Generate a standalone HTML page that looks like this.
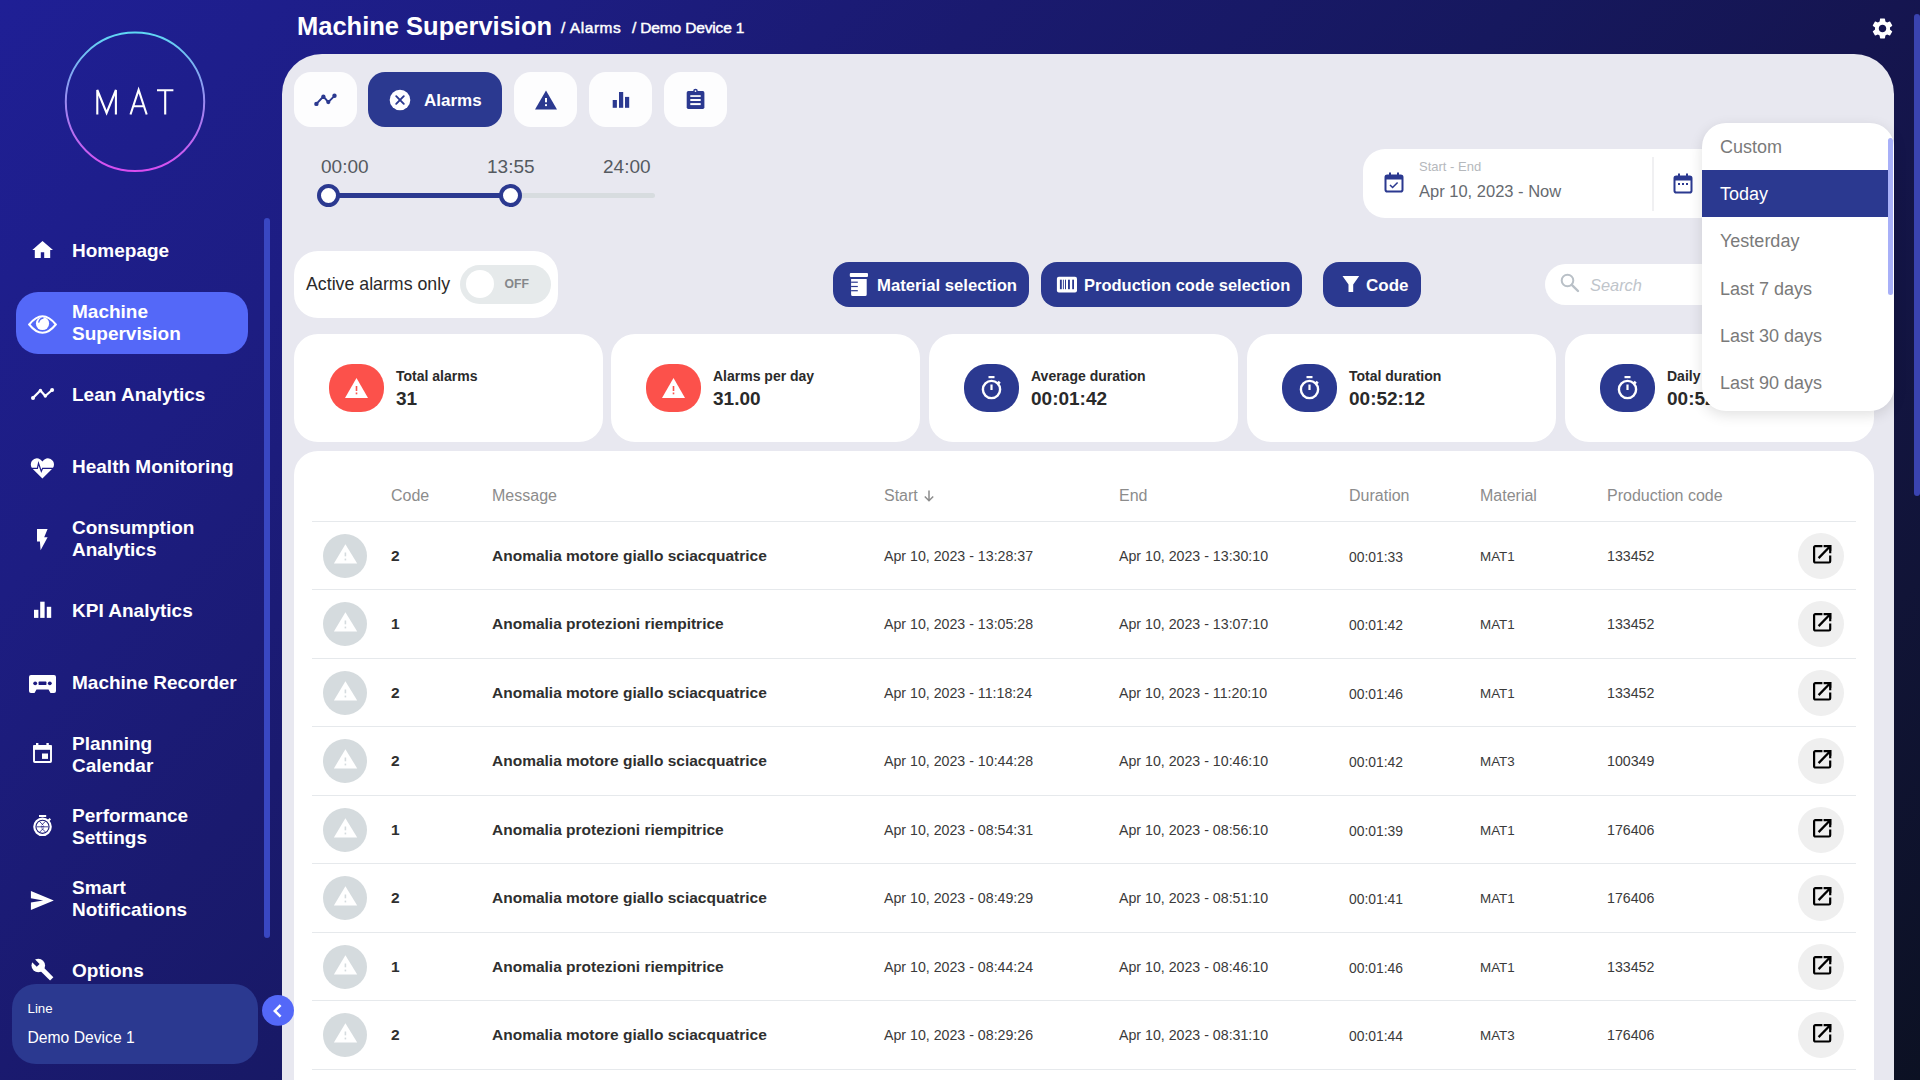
<!DOCTYPE html>
<html><head><meta charset="utf-8">
<style>
*{box-sizing:border-box;margin:0;padding:0}
html,body{width:1920px;height:1080px;overflow:hidden}
body{font-family:"Liberation Sans",sans-serif;background:linear-gradient(133deg,rgb(31,31,149) 0%,rgb(29,29,130) 19%,rgb(26,26,111) 34%,rgb(22,24,94) 52%,rgb(21,21,80) 65%,rgb(17,20,55) 84%,rgb(12,17,35) 100%);position:relative;color:#222}
.abs{position:absolute}
.nav{position:absolute;left:72px;color:#fff;font-weight:bold;font-size:19px;line-height:22px;white-space:nowrap}
.nico{position:absolute;left:30px;width:24px;height:24px}
#panel{position:absolute;left:282px;top:54px;width:1612px;height:1100px;background:#e8e8f0;border-top-left-radius:40px;border-top-right-radius:40px}
.tab{position:absolute;top:72px;height:55px;width:63px;background:#fdfdfe;border-radius:17px}
.card{position:absolute;background:#fff}
.btn{position:absolute;top:262px;height:45px;background:#2b3990;border-radius:16px;color:#fff;font-size:17px;font-weight:bold;white-space:nowrap}
.stat{position:absolute;top:334px;height:108px;width:309px;background:#fff;border-radius:24px}
.sico{position:absolute;left:35px;top:30px;width:55px;height:48px;border-radius:23px}
.slab{position:absolute;left:102px;top:34.3px;font-size:14px;font-weight:bold;color:#2a2a2a;white-space:nowrap}
.sval{position:absolute;left:102px;top:54.1px;font-size:19px;font-weight:bold;color:#2a2a2a;white-space:nowrap}
.th{position:absolute;top:486.5px;font-size:16px;color:#8c8c8c;white-space:nowrap}
.row{position:absolute;left:312px;width:1544px;height:69px;border-top:1px solid #e6e9ec}
.cell{position:absolute;font-size:14.2px;color:#3a3a3a;white-space:nowrap;top:25.7px}
.ricon{position:absolute;left:11px;top:12px;width:44px;height:44px;border-radius:50%;background:#d5dbde}
.edit{position:absolute;left:1486px;top:11px;width:46px;height:46px;border-radius:50%;background:#efefef}
.dd{position:absolute;left:20px;font-size:18px;color:#7a7a7a;white-space:nowrap}
</style></head><body>

<!-- SIDEBAR -->
<svg class="abs" style="left:60px;top:27px" width="150" height="150" viewBox="0 0 150 150">
<defs><linearGradient id="lg" x1="0" y1="0" x2="0" y2="1"><stop offset="0" stop-color="#5fd8f4"/><stop offset="0.5" stop-color="#9a8af0"/><stop offset="1" stop-color="#d94df0"/></linearGradient></defs>
<circle cx="75" cy="74.8" r="69.2" fill="none" stroke="url(#lg)" stroke-width="2"/>
</svg>
<svg class="abs" style="left:0;top:0" width="200" height="130" viewBox="0 0 200 130"><g fill="none" stroke="#fff" stroke-width="2.1" stroke-linejoin="miter"><path d="M97.3 114.5V90L106.6 113L115.9 90V114.5"/><path d="M130.5 114.5L138.6 89.8L146.7 114.5M133.2 106.2H144"/><path d="M157 90.3H173.4M165.2 90.3V114.5"/></g></svg>
<div class="abs" style="left:264px;top:218px;width:6px;height:720px;border-radius:3px;background:#3947c2"></div>

<div class="abs" style="left:16px;top:292px;width:232px;height:62px;border-radius:22px;background:#5468f8"></div>

<div class="nav" style="top:240px">Homepage</div>
<div class="nav" style="top:301px">Machine<br>Supervision</div>
<div class="nav" style="top:384px">Lean Analytics</div>
<div class="nav" style="top:456px">Health Monitoring</div>
<div class="nav" style="top:517px">Consumption<br>Analytics</div>
<div class="nav" style="top:600px">KPI Analytics</div>
<div class="nav" style="top:672px">Machine Recorder</div>
<div class="nav" style="top:733px">Planning<br>Calendar</div>
<div class="nav" style="top:805px">Performance<br>Settings</div>
<div class="nav" style="top:877px">Smart<br>Notifications</div>
<div class="nav" style="top:960px">Options</div>

<div class="abs" style="left:12px;top:984px;width:246px;height:80px;border-radius:24px;background:#2b3990"></div>
<div class="abs" style="left:27.5px;top:1001px;font-size:13.3px;color:#fff">Line</div>
<div class="abs" style="left:27.5px;top:1029px;font-size:15.7px;color:#fff">Demo Device 1</div>


<!-- SIDEBAR ICONS -->
<svg class="abs" style="left:0;top:0" width="282" height="1080" viewBox="0 0 282 1080">
<g fill="#fff">
<path d="M32.3 250L42.5 241L53 250H50.2V258H44.2V252.3H40.8V258H34.8V250Z"/>
<path d="M29.2 324.5Q42.5 308 55.8 324.5Q42.5 341 29.2 324.5Z" fill="none" stroke="#fff" stroke-width="2"/>
<circle cx="42.5" cy="323.5" r="6.6"/>
<path d="M38.8 322.2Q39.5 318.6 43 318" fill="none" stroke="#5468f8" stroke-width="1.3" stroke-linecap="round"/>
<polyline points="33,397.9 40.4,390.5 45.3,396 52.1,390" fill="none" stroke="#fff" stroke-width="2.2" stroke-linejoin="round"/>
<circle cx="33" cy="397.9" r="2"/><circle cx="40.4" cy="390.5" r="1.7"/><circle cx="45.3" cy="396" r="1.7"/><circle cx="52.1" cy="390" r="2"/>
<path d="M42.4 478.6L31.8 468Q29.8 464.5 31.8 461Q34.6 457.5 38.5 458.5Q41 459.3 42.4 461.5Q43.8 459.3 46.3 458.5Q50.2 457.5 53 461Q55 464.5 53 468Z"/>
<polyline points="30,468.3 37.4,468.3 38.5,463.2 41.3,471.4 42.6,468.3 55,468.3" fill="none" stroke="#1e1c88" stroke-width="1.2"/>
<path d="M37 529.1H47.6L44.2 537.2H47.6L40.6 550.2L39.9 541.6H37Z"/>
<rect x="34" y="609.8" width="4.4" height="8.1"/><rect x="40.2" y="601.7" width="4.4" height="16.2"/><rect x="46.8" y="606.8" width="4.4" height="11.1"/>
<path d="M31 675H54A2 2 0 0 1 56 677V691A2 2 0 0 1 54 693H50.5L48.5 689.5H36.5L34.5 693H31A2 2 0 0 1 29 691V677A2 2 0 0 1 31 675Z"/>
<circle cx="35.2" cy="683.3" r="1.9" fill="#1c1a80"/><circle cx="49.8" cy="683.3" r="1.9" fill="#1c1a80"/><rect x="38.6" y="681.6" width="7.8" height="3.4" rx="0.6" fill="#1c1a80"/>
<path d="M35 746H50.2A0.8 0.8 0 0 1 51 746.8V761.2A0.8 0.8 0 0 1 50.2 762H34.8A0.8 0.8 0 0 1 34 761.2V746.8A0.8 0.8 0 0 1 34.8 746Z" fill="none" stroke="#fff" stroke-width="1.9"/>
<rect x="33.2" y="745.2" width="18.6" height="4.6"/><rect x="36" y="743" width="2.4" height="3"/><rect x="46.4" y="743" width="2.4" height="3"/>
<rect x="42" y="753.5" width="6" height="5.4"/>
<rect x="39" y="815" width="7.2" height="2"/>
<circle cx="42.5" cy="826.8" r="8.2" fill="none" stroke="#fff" stroke-width="2.2"/>
<circle cx="42.5" cy="826.8" r="6"/>
<path d="M44.2 826.8L36.5 826.8M40.8 826.8L48.5 826.8M43.4 825.3L39.5 821.5M41.6 828.3L45.5 832M41.6 825.3L45.2 821.5M43.4 828.3L39.8 832" stroke="#1c1a80" stroke-width="0.8"/>
<path d="M48.3 820.8L50.3 818.8" stroke="#fff" stroke-width="2"/>
<path d="M30.9 890.9L53.8 900.4L30.9 909.9L30.9 902.6L43.2 900.4L30.9 898.2Z"/>
<mask id="wm"><rect x="0" y="940" width="80" height="60" fill="#fff"/><rect x="36.3" y="956" width="4" height="9.3" fill="#000" transform="rotate(-45 38.3 965.5)"/></mask>
<g mask="url(#wm)"><g transform="rotate(-45 38.3 965.5)"><circle cx="38.3" cy="965.5" r="6.8"/><rect x="35.95" y="965.5" width="4.7" height="19"/></g></g>
</g>
</svg>

<!-- HEADER -->
<div class="abs" style="left:297px;top:12px;font-size:25.5px;font-weight:bold;color:#fff;white-space:nowrap">Machine Supervision</div>
<div class="abs" style="left:561px;top:19px;font-size:15.5px;color:#fff;white-space:nowrap;-webkit-text-stroke:0.45px #fff;letter-spacing:0.55px">/ Alarms</div>
<div class="abs" style="left:632px;top:19px;font-size:15.5px;color:#fff;white-space:nowrap;-webkit-text-stroke:0.45px #fff;letter-spacing:-0.15px">/ Demo Device 1</div>

<!-- MAIN PANEL -->
<div id="panel"></div>
<div class="abs" style="left:1914px;top:14px;width:6px;height:482px;border-radius:3px;background:#3a43b0"></div>


<!-- TABS -->
<div class="tab" style="left:294px"></div>
<svg class="abs" style="left:313px;top:88px" width="24" height="24" viewBox="0 0 24 24"><polyline points="3.4,15.9 10.4,8.5 15.3,14.1 21.5,7.8" fill="none" stroke="#2b3990" stroke-width="1.9" stroke-linejoin="round"/><circle cx="3.4" cy="15.9" r="2.2" fill="#2b3990"/><circle cx="21.5" cy="7.8" r="2.2" fill="#2b3990"/><circle cx="10.4" cy="8.5" r="2.1" fill="#2b3990"/><circle cx="15.3" cy="14.1" r="2.1" fill="#2b3990"/></svg>
<div class="tab" style="left:368px;width:134px;background:#2b3990"></div>
<svg class="abs" style="left:389px;top:89px" width="22" height="22" viewBox="0 0 22 22"><circle cx="11" cy="11" r="10.3" fill="#fff"/><path d="M7.2 7.2L14.8 14.8M14.8 7.2L7.2 14.8" stroke="#2b3990" stroke-width="1.9" stroke-linecap="round"/></svg>
<div class="abs" style="left:424px;top:90.5px;font-size:17px;font-weight:bold;color:#fff">Alarms</div>
<div class="tab" style="left:514px"></div>
<svg class="abs" style="left:534px;top:90px" width="24" height="20" viewBox="0 0 24 20"><path d="M12 0.5L23 19.5H1Z" fill="#2b3990"/><rect x="11" y="8" width="2" height="4.3" fill="#fff"/><rect x="11" y="14.2" width="2" height="1.9" fill="#fff"/></svg>
<div class="tab" style="left:589px"></div>
<svg class="abs" style="left:611px;top:91px" width="20" height="18" viewBox="0 0 20 18"><rect x="1.7" y="9" width="4.2" height="7.8" fill="#2b3990"/><rect x="8" y="1" width="4.2" height="15.8" fill="#2b3990"/><rect x="14" y="5.9" width="4.2" height="10.9" fill="#2b3990"/></svg>
<div class="tab" style="left:664px"></div>
<svg class="abs" style="left:685px;top:88px" width="20" height="22" viewBox="0 0 20 22"><rect x="1.7" y="3.1" width="17.7" height="17.8" rx="1.6" fill="#2b3990"/><circle cx="10.5" cy="3" r="2.3" fill="#2b3990"/><circle cx="10.5" cy="3.1" r="0.9" fill="#fff"/><rect x="5.3" y="7.2" width="10.4" height="1.7" fill="#fff"/><rect x="5.3" y="11" width="10.4" height="2" fill="#fff"/><rect x="5.3" y="15.1" width="10.4" height="2" fill="#fff"/></svg>

<!-- SLIDER -->
<div class="abs" style="left:321px;top:156px;font-size:19px;color:#555a60">00:00</div>
<div class="abs" style="left:487px;top:156px;font-size:19px;color:#555a60">13:55</div>
<div class="abs" style="left:603px;top:156px;font-size:19px;color:#555a60">24:00</div>
<div class="abs" style="left:328px;top:193px;width:327px;height:5px;border-radius:3px;background:#d7dcdf"></div>
<div class="abs" style="left:328px;top:193px;width:183px;height:5px;background:#2b3990"></div>
<div class="abs" style="left:317px;top:184px;width:23px;height:23px;border-radius:50%;background:#fff;border:4.5px solid #2b3990"></div>
<div class="abs" style="left:499px;top:184px;width:23px;height:23px;border-radius:50%;background:#fff;border:4.5px solid #2b3990"></div>

<!-- DATE PICKER -->
<div class="card" style="left:1363px;top:149px;width:400px;height:69px;border-radius:22px"></div>
<svg class="abs" style="left:1384px;top:172px" width="20" height="21" viewBox="0 0 20 21"><rect x="1.5" y="3.5" width="17" height="16" rx="1.8" fill="none" stroke="#2b3990" stroke-width="2"/><rect x="1.5" y="3.5" width="17" height="4" fill="#2b3990"/><rect x="5" y="0.5" width="2" height="4" fill="#2b3990"/><rect x="13" y="0.5" width="2" height="4" fill="#2b3990"/><path d="M6 13l2.6 2.5 5-5" fill="none" stroke="#2b3990" stroke-width="1.6"/></svg>
<div class="abs" style="left:1419px;top:159px;font-size:13px;color:#b5b8bc">Start - End</div>
<div class="abs" style="left:1419px;top:181.5px;font-size:16.5px;color:#666a70">Apr 10, 2023 - Now</div>
<div class="abs" style="left:1652px;top:157px;width:2px;height:54px;background:#f0f0f2"></div>
<svg class="abs" style="left:1673px;top:173px" width="20" height="21" viewBox="0 0 20 21"><rect x="1.5" y="3.5" width="17" height="16" rx="1.8" fill="none" stroke="#2b3990" stroke-width="2"/><rect x="1.5" y="3.5" width="17" height="4" fill="#2b3990"/><rect x="5" y="0.5" width="2" height="4" fill="#2b3990"/><rect x="13" y="0.5" width="2" height="4" fill="#2b3990"/><rect x="5" y="10" width="2" height="2" fill="#2b3990"/><rect x="9" y="10" width="2" height="2" fill="#2b3990"/><rect x="13" y="10" width="2" height="2" fill="#2b3990"/></svg>


<!-- ACTIVE ALARMS -->
<div class="card" style="left:294px;top:251px;width:264px;height:67px;border-radius:24px"></div>
<div class="abs" style="left:306px;top:273.7px;font-size:17.75px;color:#2a2a2a;white-space:nowrap">Active alarms only</div>
<div class="abs" style="left:460px;top:265px;width:91px;height:39px;border-radius:20px;background:#e6eaeb"></div>
<div class="abs" style="left:466px;top:270px;width:28px;height:28px;border-radius:50%;background:#fff"></div>
<div class="abs" style="left:504.5px;top:277.3px;font-size:12.2px;font-weight:bold;color:#84878a">OFF</div>

<!-- FILTER BUTTONS -->
<div class="btn" style="left:833px;width:196px"></div>
<svg class="abs" style="left:849px;top:272px" width="20" height="26" viewBox="0 0 20 26"><rect x="0.8" y="1" width="18.2" height="4" rx="1" fill="#fff"/><path d="M2.1 6.9H17.7V22.6A1.5 1.5 0 0 1 16.2 24.1H3.6A1.5 1.5 0 0 1 2.1 22.6Z" fill="#fff"/><rect x="2.1" y="9.6" width="6.7" height="1.2" fill="#2b3990"/><rect x="2.1" y="13.9" width="6.7" height="1.2" fill="#2b3990"/><rect x="2.1" y="18.1" width="6.7" height="1.2" fill="#2b3990"/></svg>
<div class="abs" style="left:877px;top:276.2px;font-size:16.7px;font-weight:bold;color:#fff;white-space:nowrap">Material selection</div>
<div class="btn" style="left:1041px;width:261px"></div>
<svg class="abs" style="left:1056px;top:276px" width="22" height="17" viewBox="0 0 22 17"><rect x="0.9" y="0.7" width="20.1" height="15.7" rx="2" fill="#fff"/><g fill="#2b3990"><rect x="3.9" y="3.7" width="1.9" height="9.5"/><rect x="6.9" y="3.7" width="0.9" height="9.5"/><rect x="9" y="3.7" width="1" height="9.5"/><rect x="12" y="3.7" width="1.9" height="9.5"/><rect x="16.2" y="3.7" width="1.8" height="9.5"/></g></svg>
<div class="abs" style="left:1084px;top:276.2px;font-size:16.5px;font-weight:bold;color:#fff;white-space:nowrap">Production code selection</div>
<div class="btn" style="left:1323px;width:98px"></div>
<svg class="abs" style="left:1342px;top:275px" width="18" height="18" viewBox="0 0 18 18"><path d="M0.5 0.9H17.2L11.2 9.6V17.1H6.5V9.6Z" fill="#fff"/></svg>
<div class="abs" style="left:1366px;top:276.2px;font-size:17px;font-weight:bold;color:#fff;white-space:nowrap">Code</div>

<!-- SEARCH -->
<div class="card" style="left:1545px;top:264px;width:200px;height:41px;border-radius:21px"></div>
<svg class="abs" style="left:1560px;top:273px" width="20" height="20" viewBox="0 0 20 20"><circle cx="7.5" cy="7.5" r="5.8" fill="none" stroke="#b9c0c7" stroke-width="2"/><path d="M11.8 11.8L18 18" stroke="#b9c0c7" stroke-width="2.4" stroke-linecap="round"/></svg>
<div class="abs" style="left:1590px;top:275.5px;font-size:16.4px;font-style:italic;color:#bfc5cb">Search</div>

<!-- STAT CARDS -->
<div class="stat" style="left:294px"><div class="sico" style="background:#fc514b"><svg class="abs" style="left:15px;top:13px" width="25" height="22" viewBox="0 0 25 22"><path d="M12.5 1L24 21H1Z" fill="#fff"/><rect x="11.7" y="9" width="1.6" height="5" fill="#fc514b"/><rect x="11.7" y="15.5" width="1.6" height="1.8" fill="#fc514b"/></svg></div><div class="slab">Total alarms</div><div class="sval">31</div></div>
<div class="stat" style="left:611px"><div class="sico" style="background:#fc514b"><svg class="abs" style="left:15px;top:13px" width="25" height="22" viewBox="0 0 25 22"><path d="M12.5 1L24 21H1Z" fill="#fff"/><rect x="11.7" y="9" width="1.6" height="5" fill="#fc514b"/><rect x="11.7" y="15.5" width="1.6" height="1.8" fill="#fc514b"/></svg></div><div class="slab">Alarms per day</div><div class="sval">31.00</div></div>
<div class="stat" style="left:929px"><div class="sico" style="background:#2b3990"><svg class="abs" style="left:15px;top:11px" width="25" height="26" viewBox="0 0 25 26"><rect x="9.5" y="1" width="6" height="2.2" fill="#fff"/><circle cx="12.5" cy="14.5" r="8.6" fill="none" stroke="#fff" stroke-width="2.4"/><path d="M12.5 9.5v5.5" stroke="#fff" stroke-width="2.2"/><path d="M19 6.5l2 2" stroke="#fff" stroke-width="2.2"/></svg></div><div class="slab">Average duration</div><div class="sval">00:01:42</div></div>
<div class="stat" style="left:1247px"><div class="sico" style="background:#2b3990"><svg class="abs" style="left:15px;top:11px" width="25" height="26" viewBox="0 0 25 26"><rect x="9.5" y="1" width="6" height="2.2" fill="#fff"/><circle cx="12.5" cy="14.5" r="8.6" fill="none" stroke="#fff" stroke-width="2.4"/><path d="M12.5 9.5v5.5" stroke="#fff" stroke-width="2.2"/><path d="M19 6.5l2 2" stroke="#fff" stroke-width="2.2"/></svg></div><div class="slab">Total duration</div><div class="sval">00:52:12</div></div>
<div class="stat" style="left:1565px"><div class="sico" style="background:#2b3990"><svg class="abs" style="left:15px;top:11px" width="25" height="26" viewBox="0 0 25 26"><rect x="9.5" y="1" width="6" height="2.2" fill="#fff"/><circle cx="12.5" cy="14.5" r="8.6" fill="none" stroke="#fff" stroke-width="2.4"/><path d="M12.5 9.5v5.5" stroke="#fff" stroke-width="2.2"/><path d="M19 6.5l2 2" stroke="#fff" stroke-width="2.2"/></svg></div><div class="slab">Daily average duration</div><div class="sval">00:52:12</div></div>

<!-- TABLE -->
<div class="card" style="left:294px;top:451px;width:1580px;height:700px;border-radius:24px"></div>
<div class="th" style="left:391px">Code</div>
<div class="th" style="left:492px">Message</div>
<div class="th" style="left:884px">Start</div>
<svg class="abs" style="left:922px;top:489px" width="14" height="14" viewBox="0 0 14 14"><path d="M7 1.5v10M2.8 7.5L7 11.7l4.2-4.2" fill="none" stroke="#8c8c8c" stroke-width="1.5"/></svg>
<div class="th" style="left:1119px">End</div>
<div class="th" style="left:1349px">Duration</div>
<div class="th" style="left:1480px">Material</div>
<div class="th" style="left:1607px">Production code</div>
<div class="row" style="top:521px">
<div class="ricon"><svg class="abs" style="left:10px;top:10px" width="25" height="20" viewBox="0 0 25 20"><path d="M12.4 0.2L24.2 19.4H0.9Z" fill="#fff"/><rect x="11.6" y="8.5" width="1.6" height="3.8" fill="#d5dbde"/><rect x="11.6" y="14.6" width="1.6" height="1.8" fill="#d5dbde"/></svg></div>
<div class="cell" style="left:79px;top:24.5px;font-weight:bold;font-size:15.5px;color:#2f2f2f">2</div>
<div class="cell" style="left:180px;top:24.5px;font-weight:bold;font-size:15.5px;color:#2f2f2f">Anomalia motore giallo sciacquatrice</div>
<div class="cell" style="left:572px">Apr 10, 2023 - 13:28:37</div>
<div class="cell" style="left:807px">Apr 10, 2023 - 13:30:10</div>
<div class="cell" style="left:1037px;font-size:13.9px;top:27px">00:01:33</div>
<div class="cell" style="left:1168px;font-size:13.4px;top:26.7px">MAT1</div>
<div class="cell" style="left:1295px">133452</div>
<div class="edit"><svg class="abs" style="left:15px;top:12px" width="20" height="20" viewBox="0 0 20 20"><path d="M9.4 1.1H2.3A1.2 1.2 0 0 0 1.1 2.3V16.3A1.2 1.2 0 0 0 2.3 17.5H16A1.2 1.2 0 0 0 17.2 16.3V10.5" fill="none" stroke="#000" stroke-width="2.2"/><path d="M10.6 1.1H17.2V8.3" fill="none" stroke="#000" stroke-width="2.2"/><path d="M5.6 13.1L16.4 2" stroke="#000" stroke-width="2.3"/><path d="M12.2 0H18.3V6.1Z" fill="#000"/></svg></div>
</div>
<div class="row" style="top:589px">
<div class="ricon"><svg class="abs" style="left:10px;top:10px" width="25" height="20" viewBox="0 0 25 20"><path d="M12.4 0.2L24.2 19.4H0.9Z" fill="#fff"/><rect x="11.6" y="8.5" width="1.6" height="3.8" fill="#d5dbde"/><rect x="11.6" y="14.6" width="1.6" height="1.8" fill="#d5dbde"/></svg></div>
<div class="cell" style="left:79px;top:24.5px;font-weight:bold;font-size:15.5px;color:#2f2f2f">1</div>
<div class="cell" style="left:180px;top:24.5px;font-weight:bold;font-size:15.5px;color:#2f2f2f">Anomalia protezioni riempitrice</div>
<div class="cell" style="left:572px">Apr 10, 2023 - 13:05:28</div>
<div class="cell" style="left:807px">Apr 10, 2023 - 13:07:10</div>
<div class="cell" style="left:1037px;font-size:13.9px;top:27px">00:01:42</div>
<div class="cell" style="left:1168px;font-size:13.4px;top:26.7px">MAT1</div>
<div class="cell" style="left:1295px">133452</div>
<div class="edit"><svg class="abs" style="left:15px;top:12px" width="20" height="20" viewBox="0 0 20 20"><path d="M9.4 1.1H2.3A1.2 1.2 0 0 0 1.1 2.3V16.3A1.2 1.2 0 0 0 2.3 17.5H16A1.2 1.2 0 0 0 17.2 16.3V10.5" fill="none" stroke="#000" stroke-width="2.2"/><path d="M10.6 1.1H17.2V8.3" fill="none" stroke="#000" stroke-width="2.2"/><path d="M5.6 13.1L16.4 2" stroke="#000" stroke-width="2.3"/><path d="M12.2 0H18.3V6.1Z" fill="#000"/></svg></div>
</div>
<div class="row" style="top:658px">
<div class="ricon"><svg class="abs" style="left:10px;top:10px" width="25" height="20" viewBox="0 0 25 20"><path d="M12.4 0.2L24.2 19.4H0.9Z" fill="#fff"/><rect x="11.6" y="8.5" width="1.6" height="3.8" fill="#d5dbde"/><rect x="11.6" y="14.6" width="1.6" height="1.8" fill="#d5dbde"/></svg></div>
<div class="cell" style="left:79px;top:24.5px;font-weight:bold;font-size:15.5px;color:#2f2f2f">2</div>
<div class="cell" style="left:180px;top:24.5px;font-weight:bold;font-size:15.5px;color:#2f2f2f">Anomalia motore giallo sciacquatrice</div>
<div class="cell" style="left:572px">Apr 10, 2023 - 11:18:24</div>
<div class="cell" style="left:807px">Apr 10, 2023 - 11:20:10</div>
<div class="cell" style="left:1037px;font-size:13.9px;top:27px">00:01:46</div>
<div class="cell" style="left:1168px;font-size:13.4px;top:26.7px">MAT1</div>
<div class="cell" style="left:1295px">133452</div>
<div class="edit"><svg class="abs" style="left:15px;top:12px" width="20" height="20" viewBox="0 0 20 20"><path d="M9.4 1.1H2.3A1.2 1.2 0 0 0 1.1 2.3V16.3A1.2 1.2 0 0 0 2.3 17.5H16A1.2 1.2 0 0 0 17.2 16.3V10.5" fill="none" stroke="#000" stroke-width="2.2"/><path d="M10.6 1.1H17.2V8.3" fill="none" stroke="#000" stroke-width="2.2"/><path d="M5.6 13.1L16.4 2" stroke="#000" stroke-width="2.3"/><path d="M12.2 0H18.3V6.1Z" fill="#000"/></svg></div>
</div>
<div class="row" style="top:726px">
<div class="ricon"><svg class="abs" style="left:10px;top:10px" width="25" height="20" viewBox="0 0 25 20"><path d="M12.4 0.2L24.2 19.4H0.9Z" fill="#fff"/><rect x="11.6" y="8.5" width="1.6" height="3.8" fill="#d5dbde"/><rect x="11.6" y="14.6" width="1.6" height="1.8" fill="#d5dbde"/></svg></div>
<div class="cell" style="left:79px;top:24.5px;font-weight:bold;font-size:15.5px;color:#2f2f2f">2</div>
<div class="cell" style="left:180px;top:24.5px;font-weight:bold;font-size:15.5px;color:#2f2f2f">Anomalia motore giallo sciacquatrice</div>
<div class="cell" style="left:572px">Apr 10, 2023 - 10:44:28</div>
<div class="cell" style="left:807px">Apr 10, 2023 - 10:46:10</div>
<div class="cell" style="left:1037px;font-size:13.9px;top:27px">00:01:42</div>
<div class="cell" style="left:1168px;font-size:13.4px;top:26.7px">MAT3</div>
<div class="cell" style="left:1295px">100349</div>
<div class="edit"><svg class="abs" style="left:15px;top:12px" width="20" height="20" viewBox="0 0 20 20"><path d="M9.4 1.1H2.3A1.2 1.2 0 0 0 1.1 2.3V16.3A1.2 1.2 0 0 0 2.3 17.5H16A1.2 1.2 0 0 0 17.2 16.3V10.5" fill="none" stroke="#000" stroke-width="2.2"/><path d="M10.6 1.1H17.2V8.3" fill="none" stroke="#000" stroke-width="2.2"/><path d="M5.6 13.1L16.4 2" stroke="#000" stroke-width="2.3"/><path d="M12.2 0H18.3V6.1Z" fill="#000"/></svg></div>
</div>
<div class="row" style="top:795px">
<div class="ricon"><svg class="abs" style="left:10px;top:10px" width="25" height="20" viewBox="0 0 25 20"><path d="M12.4 0.2L24.2 19.4H0.9Z" fill="#fff"/><rect x="11.6" y="8.5" width="1.6" height="3.8" fill="#d5dbde"/><rect x="11.6" y="14.6" width="1.6" height="1.8" fill="#d5dbde"/></svg></div>
<div class="cell" style="left:79px;top:24.5px;font-weight:bold;font-size:15.5px;color:#2f2f2f">1</div>
<div class="cell" style="left:180px;top:24.5px;font-weight:bold;font-size:15.5px;color:#2f2f2f">Anomalia protezioni riempitrice</div>
<div class="cell" style="left:572px">Apr 10, 2023 - 08:54:31</div>
<div class="cell" style="left:807px">Apr 10, 2023 - 08:56:10</div>
<div class="cell" style="left:1037px;font-size:13.9px;top:27px">00:01:39</div>
<div class="cell" style="left:1168px;font-size:13.4px;top:26.7px">MAT1</div>
<div class="cell" style="left:1295px">176406</div>
<div class="edit"><svg class="abs" style="left:15px;top:12px" width="20" height="20" viewBox="0 0 20 20"><path d="M9.4 1.1H2.3A1.2 1.2 0 0 0 1.1 2.3V16.3A1.2 1.2 0 0 0 2.3 17.5H16A1.2 1.2 0 0 0 17.2 16.3V10.5" fill="none" stroke="#000" stroke-width="2.2"/><path d="M10.6 1.1H17.2V8.3" fill="none" stroke="#000" stroke-width="2.2"/><path d="M5.6 13.1L16.4 2" stroke="#000" stroke-width="2.3"/><path d="M12.2 0H18.3V6.1Z" fill="#000"/></svg></div>
</div>
<div class="row" style="top:863px">
<div class="ricon"><svg class="abs" style="left:10px;top:10px" width="25" height="20" viewBox="0 0 25 20"><path d="M12.4 0.2L24.2 19.4H0.9Z" fill="#fff"/><rect x="11.6" y="8.5" width="1.6" height="3.8" fill="#d5dbde"/><rect x="11.6" y="14.6" width="1.6" height="1.8" fill="#d5dbde"/></svg></div>
<div class="cell" style="left:79px;top:24.5px;font-weight:bold;font-size:15.5px;color:#2f2f2f">2</div>
<div class="cell" style="left:180px;top:24.5px;font-weight:bold;font-size:15.5px;color:#2f2f2f">Anomalia motore giallo sciacquatrice</div>
<div class="cell" style="left:572px">Apr 10, 2023 - 08:49:29</div>
<div class="cell" style="left:807px">Apr 10, 2023 - 08:51:10</div>
<div class="cell" style="left:1037px;font-size:13.9px;top:27px">00:01:41</div>
<div class="cell" style="left:1168px;font-size:13.4px;top:26.7px">MAT1</div>
<div class="cell" style="left:1295px">176406</div>
<div class="edit"><svg class="abs" style="left:15px;top:12px" width="20" height="20" viewBox="0 0 20 20"><path d="M9.4 1.1H2.3A1.2 1.2 0 0 0 1.1 2.3V16.3A1.2 1.2 0 0 0 2.3 17.5H16A1.2 1.2 0 0 0 17.2 16.3V10.5" fill="none" stroke="#000" stroke-width="2.2"/><path d="M10.6 1.1H17.2V8.3" fill="none" stroke="#000" stroke-width="2.2"/><path d="M5.6 13.1L16.4 2" stroke="#000" stroke-width="2.3"/><path d="M12.2 0H18.3V6.1Z" fill="#000"/></svg></div>
</div>
<div class="row" style="top:932px">
<div class="ricon"><svg class="abs" style="left:10px;top:10px" width="25" height="20" viewBox="0 0 25 20"><path d="M12.4 0.2L24.2 19.4H0.9Z" fill="#fff"/><rect x="11.6" y="8.5" width="1.6" height="3.8" fill="#d5dbde"/><rect x="11.6" y="14.6" width="1.6" height="1.8" fill="#d5dbde"/></svg></div>
<div class="cell" style="left:79px;top:24.5px;font-weight:bold;font-size:15.5px;color:#2f2f2f">1</div>
<div class="cell" style="left:180px;top:24.5px;font-weight:bold;font-size:15.5px;color:#2f2f2f">Anomalia protezioni riempitrice</div>
<div class="cell" style="left:572px">Apr 10, 2023 - 08:44:24</div>
<div class="cell" style="left:807px">Apr 10, 2023 - 08:46:10</div>
<div class="cell" style="left:1037px;font-size:13.9px;top:27px">00:01:46</div>
<div class="cell" style="left:1168px;font-size:13.4px;top:26.7px">MAT1</div>
<div class="cell" style="left:1295px">133452</div>
<div class="edit"><svg class="abs" style="left:15px;top:12px" width="20" height="20" viewBox="0 0 20 20"><path d="M9.4 1.1H2.3A1.2 1.2 0 0 0 1.1 2.3V16.3A1.2 1.2 0 0 0 2.3 17.5H16A1.2 1.2 0 0 0 17.2 16.3V10.5" fill="none" stroke="#000" stroke-width="2.2"/><path d="M10.6 1.1H17.2V8.3" fill="none" stroke="#000" stroke-width="2.2"/><path d="M5.6 13.1L16.4 2" stroke="#000" stroke-width="2.3"/><path d="M12.2 0H18.3V6.1Z" fill="#000"/></svg></div>
</div>
<div class="row" style="top:1000px">
<div class="ricon"><svg class="abs" style="left:10px;top:10px" width="25" height="20" viewBox="0 0 25 20"><path d="M12.4 0.2L24.2 19.4H0.9Z" fill="#fff"/><rect x="11.6" y="8.5" width="1.6" height="3.8" fill="#d5dbde"/><rect x="11.6" y="14.6" width="1.6" height="1.8" fill="#d5dbde"/></svg></div>
<div class="cell" style="left:79px;top:24.5px;font-weight:bold;font-size:15.5px;color:#2f2f2f">2</div>
<div class="cell" style="left:180px;top:24.5px;font-weight:bold;font-size:15.5px;color:#2f2f2f">Anomalia motore giallo sciacquatrice</div>
<div class="cell" style="left:572px">Apr 10, 2023 - 08:29:26</div>
<div class="cell" style="left:807px">Apr 10, 2023 - 08:31:10</div>
<div class="cell" style="left:1037px;font-size:13.9px;top:27px">00:01:44</div>
<div class="cell" style="left:1168px;font-size:13.4px;top:26.7px">MAT3</div>
<div class="cell" style="left:1295px">176406</div>
<div class="edit"><svg class="abs" style="left:15px;top:12px" width="20" height="20" viewBox="0 0 20 20"><path d="M9.4 1.1H2.3A1.2 1.2 0 0 0 1.1 2.3V16.3A1.2 1.2 0 0 0 2.3 17.5H16A1.2 1.2 0 0 0 17.2 16.3V10.5" fill="none" stroke="#000" stroke-width="2.2"/><path d="M10.6 1.1H17.2V8.3" fill="none" stroke="#000" stroke-width="2.2"/><path d="M5.6 13.1L16.4 2" stroke="#000" stroke-width="2.3"/><path d="M12.2 0H18.3V6.1Z" fill="#000"/></svg></div>
</div>
<div class="abs" style="left:312px;top:1069px;width:1544px;height:1px;background:#e6e9ec"></div>

<!-- DROPDOWN -->
<div class="card" style="left:1702px;top:123px;width:192px;height:288px;border-radius:24px;box-shadow:0 4px 14px rgba(0,0,0,0.12);overflow:hidden">
  <div class="abs" style="left:0;top:47px;width:186px;height:47px;background:#2b3990"></div>
  <div class="abs" style="left:186px;top:15px;width:5px;height:157px;border-radius:3px;background:#a8b0f8"></div>
  <div class="dd" style="left:18px;top:14px">Custom</div>
  <div class="dd" style="left:18px;top:61px;color:#fff">Today</div>
  <div class="dd" style="left:18px;top:108px">Yesterday</div>
  <div class="dd" style="left:18px;top:155.5px">Last 7 days</div>
  <div class="dd" style="left:18px;top:202.5px">Last 30 days</div>
  <div class="dd" style="left:18px;top:249.5px">Last 90 days</div>
</div>

<!-- collapse btn -->

<svg class="abs" style="left:1870px;top:16px" width="25" height="25" viewBox="0 0 24 24"><path fill="#fff" d="M19.14 12.94c.04-.3.06-.61.06-.94 0-.32-.02-.64-.07-.94l2.03-1.58a.49.49 0 0 0 .12-.61l-1.92-3.32a.488.488 0 0 0-.59-.22l-2.39.96c-.5-.38-1.03-.7-1.62-.94l-.36-2.54a.484.484 0 0 0-.48-.41h-3.84c-.24 0-.43.17-.47.41l-.36 2.54c-.59.24-1.13.57-1.62.94l-2.39-.96c-.22-.08-.47 0-.59.22L2.74 8.87c-.12.21-.08.47.12.61l2.03 1.58c-.05.3-.09.63-.09.94s.02.64.07.94l-2.03 1.58a.49.49 0 0 0-.12.61l1.92 3.32c.12.22.37.29.59.22l2.39-.96c.5.38 1.03.7 1.62.94l.36 2.54c.05.24.24.41.48.41h3.84c.24 0 .44-.17.47-.41l.36-2.54c.59-.24 1.13-.56 1.62-.94l2.39.96c.22.08.47 0 .59-.22l1.92-3.32c.12-.22.07-.47-.12-.61l-2.01-1.58zM12 15.6c-1.98 0-3.6-1.62-3.6-3.6s1.62-3.6 3.6-3.6 3.6 1.62 3.6 3.6-1.62 3.6-3.6 3.6z"/></svg>
<svg class="abs" style="left:262px;top:994px" width="32" height="32" viewBox="0 0 32 32"><ellipse cx="16" cy="16.4" rx="16" ry="15.4" fill="#5468f8"/><path d="M18.6 11.1L12.8 16.9L18.6 22.7" fill="none" stroke="#fff" stroke-width="2.5"/></svg>


</body></html>
